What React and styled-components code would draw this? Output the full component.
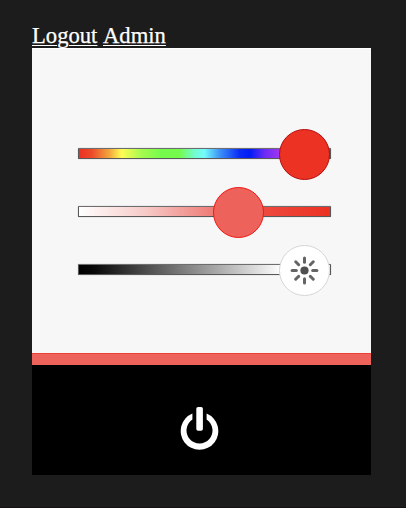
import React from "react";
import styled, { createGlobalStyle } from "styled-components";

const GlobalStyle = createGlobalStyle`
  * { box-sizing: border-box; }
  html, body { margin: 0; height: 100%; background: #1c1c1c; }
`;

const Page = styled.div`
  height: 508px;
  width: 406px;
  padding: 23px 35px 0 32px;
  border-bottom: 1px solid #180e14;
  overflow: hidden;
  background: #1c1c1c;
`;

const Nav = styled.nav`
  display: flex;
  gap: 5.6px;
  height: 25px;
  font: 22.65px/25px "Liberation Serif", "Times New Roman", serif;
  -webkit-text-stroke: 0.25px #fff;
`;

const NavLink = styled.a`
  color: #fff;
  text-decoration: underline;
  text-decoration-thickness: 1px;
  text-underline-offset: 2px;
`;

const Panel = styled.main`
  display: flex;
  flex-direction: column;
  height: 427px;
  background: #000;
`;

const Controls = styled.section`
  display: flex;
  flex-direction: column;
  gap: 6px;
  height: 305px;
  padding: 80px 40px 0 46px;
  background: #f7f7f7;
  border-top: 1px solid #fff;
`;

const Slider = styled.div`
  display: flex;
  align-items: flex-start;
  height: 52px;
  padding-top: 19px;
  position: relative;
`;

const Track = styled.div`
  width: 253px;
  height: 11px;
  border: 1px solid #58585a;
  border-top-color: #6d6d6f;
  border-radius: 1px;
  background: linear-gradient(to right, ${(p) => p.$stops});
  box-shadow: 0 0 1px #888;
`;

const Thumb = styled.div`
  position: absolute;
  top: 0;
  left: ${(p) => p.$left}px;
  display: grid;
  place-items: center;
  width: 51px;
  height: 51px;
  border-radius: 50%;
  border: 1px solid ${(p) => p.$edge};
  background: ${(p) => p.$fill};
`;

const Preview = styled.div`
  height: 12px;
  background: #ed635c;
  border-top: 1px solid #ec4034;
`;

const PowerButton = styled.button`
  display: flex;
  justify-content: center;
  flex: 1;
  padding: 40px 3px 0 0;
  border: 0;
  background: #000;
`;

const rays = [0, 45, 90, 135, 180, 225, 270, 315];

const Sun = () => (
  <svg width="29" height="29" viewBox="-14.5 -14.5 29 29">
    <circle r="4.1" fill="#505050" />
    {rays.map((angle) => (
      <path
        key={angle}
        d="M0-8.2V-12.4"
        transform={`rotate(${angle})`}
        stroke="#646464"
        strokeWidth="3"
        strokeLinecap="round"
      />
    ))}
  </svg>
);

const Power = () => (
  <svg width="40" height="46" viewBox="0 0 40 46" fill="#fff">
    <path d="M12.4 8.6A18.8 18.8 0 1 0 26.6 8.6V14.6A13 13 0 1 1 12.4 14.6Z" />
    <rect x="16.3" y="2" width="6.6" height="23.8" rx="1.8" />
  </svg>
);

const HUE =
  "#eb3223 0%, #ec4a29 5%, #f2a53c 12%, #fffd54 17%, #a5fb4f 25%, #75fb4c 33%, #75fb4c 40%, #73fcd0 46%, #73fbfd 50%, #3d93f7 56%, #0a2bf5 64%, #001cf5 68%, #6b2cf5 74%, #a135f0 80%, #ea3ff7 86%, #eb3223 100%";
const SATURATION = "#fff 0%, #f6c9c6 27%, #f08580 50%, #ee4c42 70%, #eb3223 100%";
const BRIGHTNESS = "#000 0%, #080808 6%, #fff 81%, #fff 100%";

export default function App() {
  return (
    <>
      <GlobalStyle />
      <Page>
        <Nav>
          <NavLink href="#logout">Logout</NavLink>
          <NavLink href="#admin">Admin</NavLink>
        </Nav>
        <Panel>
          <Controls>
            <Slider>
              <Track $stops={HUE} />
              <Thumb $left={201} $fill="#eb3223" $edge="#b40c0c" />
            </Slider>
            <Slider>
              <Track $stops={SATURATION} />
              <Thumb $left={135} $fill="#ed635c" $edge="#f01510" />
            </Slider>
            <Slider>
              <Track $stops={BRIGHTNESS} />
              <Thumb $left={201} $fill="#fff" $edge="#d6d6d6">
                <Sun />
              </Thumb>
            </Slider>
          </Controls>
          <Preview />
          <PowerButton aria-label="Power">
            <Power />
          </PowerButton>
        </Panel>
      </Page>
    </>
  );
}
